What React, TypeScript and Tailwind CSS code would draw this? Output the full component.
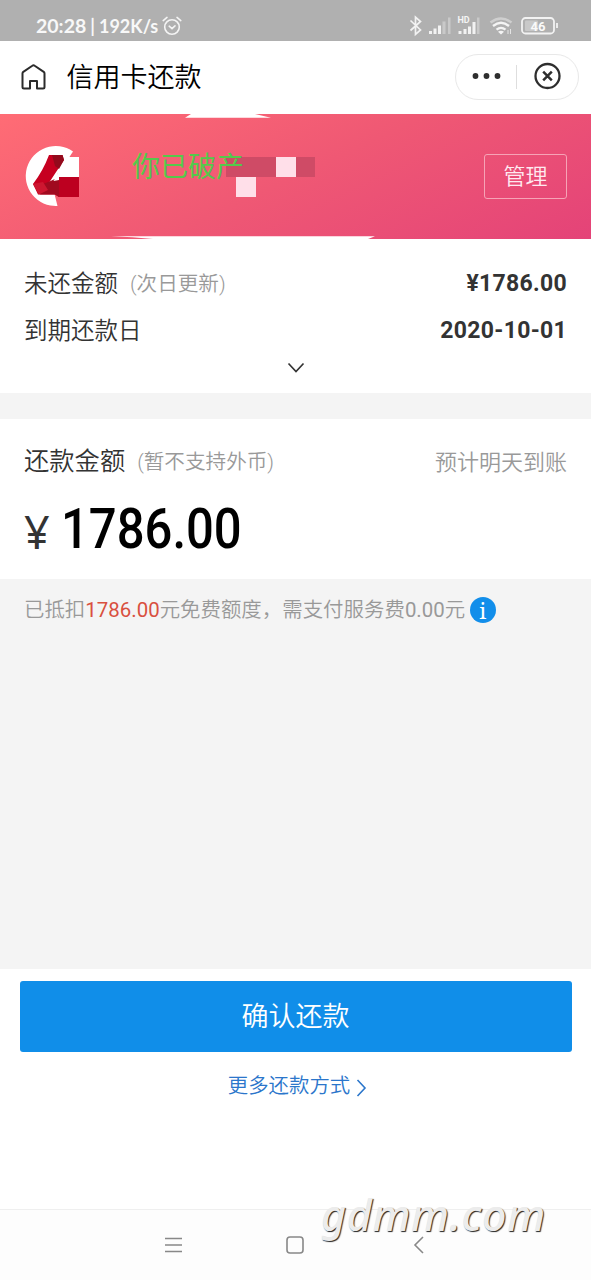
import { ReactNode } from 'react'

const CJK = "font-['Roboto','Noto_Sans_CJK_SC',sans-serif]"

function StatusBar() {
  return (
    <div className="flex h-[41px] items-start justify-between bg-[#b0b0b0] pt-[15px] pr-[33px] pl-9 text-[#f8f8f8]">
      <div className="flex items-center">
        <span className="flex w-[124px] items-baseline font-['Lato'] leading-[22px] font-bold whitespace-nowrap">
          <span className="text-[19.500px]">20:28</span>
          <span className="ml-[4px] text-[18px]">|</span>
          <span className="ml-[4px] text-[18px]">192K/s</span>
        </span>
        <svg width="20" height="20" viewBox="0 0 20 20" className="ml-[2px]" fill="none" stroke="#f4f4f4" strokeWidth="1.6" strokeLinecap="round">
          <circle cx="10" cy="11" r="7.3" />
          <path d="M1.200 4.600 5 1.400M18.800 4.600 15 1.400M7.200 10.200 10 12.600l3-2.800" />
        </svg>
      </div>
      <svg width="150" height="24" viewBox="408 15 150 24" fill="none">
        <path d="m410.500 20.500 10 9.500-5 4.300V17.200l5 4.300-10 9" stroke="#f2f2f2" strokeWidth="1.700" />
        <path d="M429 31h3v3h-3zM433.500 28.500h3v5.500h-3zM438 25.500h3v8.500h-3z" fill="#f2f2f2" />
        <path d="M442.500 21.500h3v12.500h-3zM448 17.500h2.500v16.500h-2.500z" fill="#c9c9c9" />
        <path d="M458.500 31h3v3h-3zM463.500 29h3v5h-3zM468 26.500h3v7.500h-3zM472.500 22h3v12h-3z" fill="#f2f2f2" />
        <path d="M477 17.500h2.500v16.500h-2.500z" fill="#c9c9c9" />
        <text x="457.500" y="23" fontFamily="Roboto" fontSize="9" fontWeight="700" fill="#f4f4f4">HD</text>
        <path d="M490.500 22.500q10.500-8 21 0" stroke="#cfcfcf" strokeWidth="2.500" />
        <path d="M493 26q8-6.500 16 0M496.500 29.700q4.500-3.600 9 0" stroke="#f4f4f4" strokeWidth="2.300" />
        <path d="m501 34.500-3-2.700q3-2 6 0z" fill="#f4f4f4" />
        <path d="M508 30v4M510.500 29v5" stroke="#e4e4e4" />
        <rect x="522" y="18" width="32" height="15.500" rx="3.500" stroke="#f2f2f2" strokeWidth="1.800" />
        <rect x="525" y="20.500" width="13" height="10.500" rx="1" fill="#c9c9c9" />
        <path d="M557 23v5" stroke="#f2f2f2" strokeWidth="1.800" />
        <text x="530.500" y="30.500" fontFamily="Roboto" fontSize="13" fontWeight="700" fill="#fafafa">46</text>
      </svg>
    </div>
  )
}

function NavBar() {
  return (
    <div className="flex h-[73px] items-center justify-between bg-white pr-3 pl-[21px]">
      <div className="flex items-center">
        <svg className="-mt-px" width="25" height="26" viewBox="0 0 25 26" fill="none" stroke="#2b2b2b" strokeWidth="2" strokeLinejoin="round">
          <path d="M9 24.500H3a1.500 1.500 0 0 1-1.500-1.500V9.500a2 2 0 0 1 .8-1.600l9-6.200a2 2 0 0 1 2.400 0l9 6.200a2 2 0 0 1 .8 1.600V23a1.500 1.500 0 0 1-1.500 1.500h-6V17H9z" />
        </svg>
        <h1 className="ml-[20.500px] text-[27px] leading-[36px] font-[350] text-black">信用卡还款</h1>
      </div>
      <div className="-mt-px flex h-[46px] w-[124px] items-center rounded-full border border-[#e8e8e8]">
        <svg width="60" height="44" viewBox="0 0 60 44" fill="#2e2e2e">
          <circle cx="19.500" cy="21" r="2.900" />
          <circle cx="30.500" cy="21" r="2.900" />
          <circle cx="41.500" cy="21" r="2.900" />
        </svg>
        <div className="h-6 w-px bg-[#dedede]" />
        <svg width="60" height="44" viewBox="0 0 60 44" fill="none" stroke="#2e2e2e">
          <circle cx="30.500" cy="21" r="12" strokeWidth="2.300" />
          <path d="m26.200 16.700 8.600 8.600m0-8.600-8.600 8.600" strokeWidth="2.500" />
        </svg>
      </div>
    </div>
  )
}

function BankBanner() {
  return (
    <div className="relative flex h-[125px] items-center justify-between bg-linear-[155deg,#ff6c75_0%,#ef5874_50%,#e44378_100%] pr-6 pl-[25px]">
      {/* torn white edges and mosaic blocks */}
      <svg className="absolute inset-0" width="591" height="125" viewBox="0 114 591 125">
        <path d="m185 117.800 6-3.800h64l16 3.800zM111 236.200h264l-7 2.800H153q-20-2-42-2.800z" fill="#fff" />
        <path d="M226 157h89v20h-89z" fill="#cf4b66" />
        <path d="M236 177h20v20h-20zM276 157h20v20h-20z" fill="#ffdfe9" />
      </svg>
      <svg className="relative -mt-px" width="55" height="62" viewBox="25 145 55 62">
        <path d="M73 151.500A30 30 0 1 0 57.500 206l-3-12 5-31h6z" fill="#fff" />
        <path d="M58 157h21v20H58z" fill="#fff" />
        <path d="M59 177h20v20H59z" fill="#bd0020" />
        {/* folded ribbon mark */}
        <path d="M49 155h13.500l1.500 5-14.500 22H59v15l-4-2.500H38L33 184q10-13 16-29z" fill="#c60020" />
        <path d="M52 155h10.500l1.500 5-5 9-4-3z" fill="#930a1c" />
        <path d="M43 184q6-2 16-7v20l-4-2.500H40z" fill="#a00a1f" />
        <path d="m33 184 10-2 5 8-9 4.500z" fill="#cd1730" />
        <path d="m53.500 181 5.500-10v9z" fill="#fff" />
      </svg>
      <span className="absolute top-[32px] left-[132px] text-[28px] leading-[44px] text-[#55c94b]">你已破产</span>
      <button className="relative -mt-px h-[45px] w-[83px] rounded-[3px] border border-[#f6a3b6] text-[22px] font-[350] text-[#ffe9f0]">
        管理
      </button>
    </div>
  )
}

function BillRow({ label, note, value }: { label: string; note?: string; value: ReactNode }) {
  return (
    <div className="flex h-[47px] items-center justify-between">
      <div className="flex items-center text-[23.500px] font-[350] text-[#333]">
        {label}
        {note && <span className="ml-3 text-[20.600px] text-[#999]">{note}</span>}
      </div>
      <span className="text-[23px] font-bold tracking-[0.300px] text-[#333]">{value}</span>
    </div>
  )
}

export default function App() {
  return (
    <div className={`flex h-[1280px] w-[591px] flex-col overflow-hidden bg-[#f4f4f4] ${CJK}`}>
      <StatusBar />
      <NavBar />
      <BankBanner />

      <section className="h-[154px] bg-white px-6 pt-[22px]">
        <BillRow label="未还金额" note="(次日更新)" value="¥1786.00" />
        <BillRow label="到期还款日" value="2020-10-01" />
        <svg className="mx-auto mt-[7px]" width="18" height="12" viewBox="0 0 18 12" fill="none" stroke="#333" strokeWidth="1.700">
          <path d="m1.500 1.500 7.500 8 7.500-8" />
        </svg>
      </section>

      <section className="mt-[26px] h-[160px] bg-white px-6 pt-[21px]">
        <div className="flex h-[44px] items-center justify-between">
          <div className="flex items-center text-[25.300px] font-[350] text-[#333]">
            还款金额
            <span className="ml-3 text-[20.600px] text-[#999]">(暂不支持外币)</span>
          </div>
          <span className="text-[22px] font-[350] text-[#999]">预计明天到账</span>
        </div>
        <div className="flex h-[60px] items-baseline pt-[15px] leading-[60px]">
          <span className="relative top-px w-[36.500px] font-['Noto_Sans'] text-[45px] text-[#333]">¥</span>
          <span className="origin-left scale-x-[0.875] text-[56px] font-medium text-black">1786.00</span>
        </div>
      </section>

      <div className="flex h-[60px] items-center pt-0.5 pl-6 text-[20.450px] font-[350] text-[#999]">
        已抵扣<span className="font-normal text-[#d9503f]">1786.00</span>元免费额度，需支付服务费<span className="font-normal">0.00</span>元
        <span className="ml-[4.500px] flex size-[26px] items-center justify-center rounded-full bg-[#128eea] font-['Noto_Serif','Liberation_Serif',serif] text-[22px] font-normal text-white">
          i
        </span>
      </div>

      <section className="mt-auto flex h-[240px] flex-col items-center bg-white pt-3">
        <button className="h-[71px] w-[552px] rounded-[3px] bg-[#108ee9] pt-0.5 text-[27px] font-[350] text-white">确认还款</button>
        <a className="mt-[18px] ml-1 flex items-center text-[20.400px] leading-[32px] font-[350] text-[#2b76cb]">
          更多还款方式
          <svg className="mt-1 ml-[6px]" width="11" height="18" viewBox="0 0 11 18" fill="none" stroke="#2b76cb" strokeWidth="1.600">
            <path d="m1.500 1 7.500 8-7.500 8" />
          </svg>
        </a>
      </section>

      <nav className="relative h-[71px] border-t border-[#efefef] bg-[#fdfdfd]">
        <div className="flex h-[69px] items-center pl-[164px]">
          <svg width="18" height="18" viewBox="0 0 18 18" stroke="#888" strokeWidth="1.500">
            <path d="M1 2.500h17M1 9h17M1 15.500h17" />
          </svg>
          <svg className="ml-[104px]" width="18" height="18" viewBox="0 0 18 18" fill="none" stroke="#888" strokeWidth="1.600">
            <rect x="1" y="1" width="16" height="16" rx="3" />
          </svg>
          <svg className="ml-[109px]" width="12" height="18" viewBox="0 0 12 18" fill="none" stroke="#888" strokeWidth="1.600">
            <path d="M10 1 2 9l8 8" />
          </svg>
        </div>
        <span className="absolute -top-[23px] left-[321px] font-['Noto_Sans'] text-[43px] leading-[56px] font-medium tracking-[0.600px] text-[#ececec] italic [text-shadow:1px_1px_1px_#222]">
          gdmm.com
        </span>
      </nav>
    </div>
  )
}
